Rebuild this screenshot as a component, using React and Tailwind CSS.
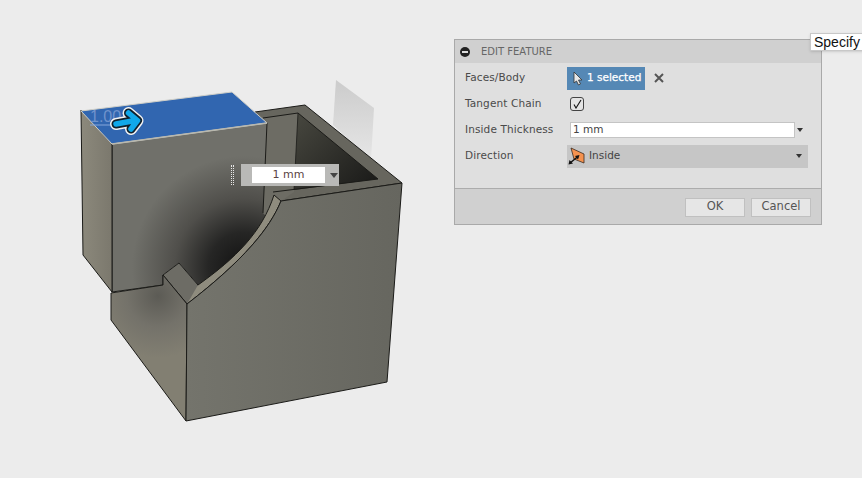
const Edge = "#1b1b18";
const dialogFont = "font-['DejaVu_Sans',sans-serif]";

const arrowPath = "M116 124 L135 120.5 M128.5 113 L137.5 120.5 L131 129";

const Model = () => (
  <svg className="absolute left-0 top-0" width="480" height="478" viewBox="0 0 480 478">
    <defs>
      <radialGradient id="frontShade" cx="244" cy="268" r="112" gradientUnits="userSpaceOnUse">
        <stop offset="0" stopColor="#111111" />
        <stop offset="0.32" stopColor="#262625" />
        <stop offset="0.62" stopColor="#504f4b" />
        <stop offset="1" stopColor="#70706a" />
      </radialGradient>
      <linearGradient id="leftFace" x1="81" y1="180" x2="112" y2="180" gradientUnits="userSpaceOnUse">
        <stop offset="0" stopColor="#8c897c" />
        <stop offset="1" stopColor="#7b786d" />
      </linearGradient>
      <radialGradient id="lowerLeft" cx="158" cy="296" r="62" gradientUnits="userSpaceOnUse">
        <stop offset="0" stopColor="#5c5b55" />
        <stop offset="0.5" stopColor="#74726a" />
        <stop offset="1" stopColor="#827f72" />
      </radialGradient>
      <linearGradient id="frontFace" x1="187" y1="300" x2="402" y2="300" gradientUnits="userSpaceOnUse">
        <stop offset="0" stopColor="#74746c" />
        <stop offset="1" stopColor="#66665f" />
      </linearGradient>
      <linearGradient id="innerBack" x1="298" y1="113" x2="370" y2="185" gradientUnits="userSpaceOnUse">
        <stop offset="0" stopColor="#47473f" />
        <stop offset="1" stopColor="#1c1c1a" />
      </linearGradient>
      <linearGradient id="plane" x1="350" y1="85" x2="350" y2="160" gradientUnits="userSpaceOnUse">
        <stop offset="0" stopColor="#cdcdcd" />
        <stop offset="1" stopColor="#e6e6e6" />
      </linearGradient>
    </defs>

    {/* sketch plane behind the part */}
    <polygon points="336,80 374,108 371,160 333,125" fill="url(#plane)" />

    {/* back box */}
    <polygon points="255,112 305,105 402,183 281,201 273,192 263,120" fill="#67665e" stroke={Edge} strokeWidth="1" strokeLinejoin="round" />
    <polygon points="263,118 298,113 294,192 281,201 262,235" fill="#6d6c64" />
    <polygon points="298,113 378,179 294,190" fill="url(#innerBack)" />
    <path d="M263 118 L298 113 L378 179 L273 192" fill="none" stroke={Edge} strokeWidth="1" />
    <path d="M298 113 L294 190" fill="none" stroke={Edge} strokeWidth="0.8" />

    {/* upper block, its lower right runs under the curved wall */}
    <path d="M112 144 L267 123 L263 213 L272 222 C255 250 230 275 205 292 L198 285 L179 263 L163 275 L163 285 L112 292 Z" fill="url(#frontShade)" />
    <path d="M112 144 L112 292 L163 285 L163 275 M267 123 L263 213" fill="none" stroke={Edge} strokeWidth="1" />
    <polygon points="81,110 112,144 112,292 83,255" fill="url(#leftFace)" stroke={Edge} strokeWidth="1" />
    <polygon points="81,111 232,92 267,123 112,144" fill="#3166b0" stroke="#cfcfc8" strokeWidth="1" />
    <path d="M112 144 L267 123" stroke="#b9b8ae" strokeWidth="1.5" />

    {/* curved cut wall */}
    <path d="M274 195 L281 201 C270 228 244 260 187 304 L176 290 L198 285 C236 258 262 232 274 195 Z" fill="#8f8c7e" stroke={Edge} strokeWidth="1" strokeLinejoin="round" />
    <polygon points="163,275 179,263 198,285 187,304" fill="#6d6c65" />
    <path d="M163 275 L179 263 L198 285 M163 275 L187 304" fill="none" stroke={Edge} strokeWidth="1" />

    {/* lower block */}
    <polygon points="111,293 163,285 163,275 187,304 186,421 111,320" fill="url(#lowerLeft)" stroke={Edge} strokeWidth="1" strokeLinejoin="round" />
    <path d="M281 201 L402 183 L387 382 L186 421 L187 304 C244 260 270 228 281 201 Z" fill="url(#frontFace)" stroke={Edge} strokeWidth="1" strokeLinejoin="round" />

    {/* shell arrow on the selected face */}
    <text x="90" y="122" fontFamily="Liberation Sans, sans-serif" fontSize="16" fill="#6f93cc">1.00</text>
    <path d="M90 125 L112 125" stroke="#86a6da" strokeWidth="1" />
    <path d={arrowPath} fill="none" stroke="#f2f2f2" strokeWidth="12" strokeLinecap="round" strokeLinejoin="round" />
    <path d={arrowPath} fill="none" stroke="#10202c" strokeWidth="9" strokeLinecap="round" strokeLinejoin="round" />
    <path d={arrowPath} fill="none" stroke="#10a8ea" strokeWidth="5.5" strokeLinecap="round" strokeLinejoin="round" />
  </svg>
);

const Row = ({ label, children }) => (
  <div className="flex h-[26px] items-center">
    <span className="w-[102px] text-[10.5px] tracking-[0.12px] text-[#4a4a4a]">{label}</span>
    {children}
  </div>
);

const App = () => {
  return (
    <div className="relative h-[478px] w-[862px] overflow-hidden bg-[#ececec] font-['Liberation_Sans',sans-serif]">
      <Model />

      {/* inline distance input next to the model */}
      <div className={`absolute left-[241px] top-[164px] flex h-[22px] w-[98px] items-center bg-[#b9b9b7] pl-[11px] ${dialogFont}`}>
        <div className="flex h-[16px] w-[73px] items-center justify-center bg-white text-[11px] text-[#5a4444]">1 mm</div>
        <span className="ml-[5px] border-x-[4px] border-t-[5px] border-x-transparent border-t-[#444]" />
      </div>
      <div className="absolute left-[231px] top-[165px] h-[20px] w-[3px] border-x border-dotted border-[#e6e6e6]" />

      {/* edit feature dialog */}
      <div className={`absolute left-[454px] top-[39px] flex h-[186px] w-[368px] flex-col border border-[#a9a9a9] bg-[#dfdfdf] ${dialogFont}`}>
        <div className="flex h-[23px] items-center bg-[#d0d0d0] pl-[5px]">
          <span className="flex h-[10px] w-[10px] items-center justify-center rounded-full bg-[#222]">
            <span className="h-[2px] w-[6px] bg-[#ddd]" />
          </span>
          <span className="ml-[11px] text-[10px] text-[#666]">EDIT FEATURE</span>
        </div>
        <div className="flex flex-1 flex-col pl-[10px] pt-[2px]">
          <Row label="Faces/Body">
            <div className="flex h-[23px] w-[78px] items-center whitespace-nowrap bg-[#5588b5] pl-[6px] text-[10.5px] text-white [-webkit-text-stroke:0.25px_white]">
              <svg width="10" height="15" viewBox="0 0 10 15" className="mr-[4px] shrink-0">
                <path d="M1 1 L1 12 L3.5 10 L5.5 14 L7.5 13 L5.5 9 L9 9 Z" fill="#e8e8e8" stroke="#333" strokeWidth="0.8" />
              </svg>
              1 selected
            </div>
            <svg width="10" height="10" viewBox="0 0 10 10" className="ml-[9px]">
              <path d="M1 1 L9 9 M9 1 L1 9" stroke="#555" strokeWidth="2" />
            </svg>
          </Row>
          <Row label="Tangent Chain">
            <div className="ml-[3px] flex h-[14px] w-[14px] items-center justify-center rounded-[3px] border border-[#444] bg-[#e4e4e4]">
              <svg width="10" height="10" viewBox="0 0 10 10">
                <path d="M2 5.5 L4 9 L9 1" fill="none" stroke="#111" strokeWidth="1.1" />
              </svg>
            </div>
          </Row>
          <Row label="Inside Thickness">
            <div className="ml-[3px] flex h-[16px] w-[225px] items-center border border-[#c4c4c4] bg-white pl-[2px] text-[10.5px] text-[#444]">1 mm</div>
            <span className="ml-[2px] border-x-[3px] border-t-[4px] border-x-transparent border-t-[#333]" />
          </Row>
          <Row label="Direction">
            <div className="flex h-[23px] w-[241px] items-center bg-[#c6c6c6] pl-[1px] text-[10.5px] text-[#444]">
              <svg width="17" height="18" viewBox="0 0 17 18" className="mr-[4px] shrink-0">
                <path d="M3 1 L16 7 L16 16 L6 12 Z" fill="#f5924f" stroke="#3a2a20" strokeWidth="0.8" />
                <path d="M2 16 L10 9.5" stroke="#111" strokeWidth="1.5" />
                <path d="M0.5 17.5 L1.5 13 L5 16.5 Z M11.5 8 L7 9 L10 12.5 Z" fill="#111" />
              </svg>
              Inside
              <span className="ml-auto mr-[6px] border-x-[3px] border-t-[4px] border-x-transparent border-t-[#333]" />
            </div>
          </Row>
        </div>
        <div className="flex h-[36px] items-center justify-end gap-[6px] border-t border-[#acacac] bg-[#d0d0d0] pr-[10px] pt-[1px]">
          <button className="flex h-[19px] w-[60px] items-center justify-center border border-[#c0c0c0] bg-[#e6e6e6] text-[11.5px] text-[#555]">OK</button>
          <button className="flex h-[19px] w-[60px] items-center justify-center border border-[#c0c0c0] bg-[#e6e6e6] text-[11.5px] text-[#555]">Cancel</button>
        </div>
      </div>

      {/* tooltip, cut off by the window edge */}
      <div className="absolute left-[810px] top-[33px] flex h-[18px] w-[60px] items-center border border-[#c8c8c8] bg-white pl-[3px] text-[14px] text-[#111] shadow-sm">Specify</div>
    </div>
  );
};

export default App;
